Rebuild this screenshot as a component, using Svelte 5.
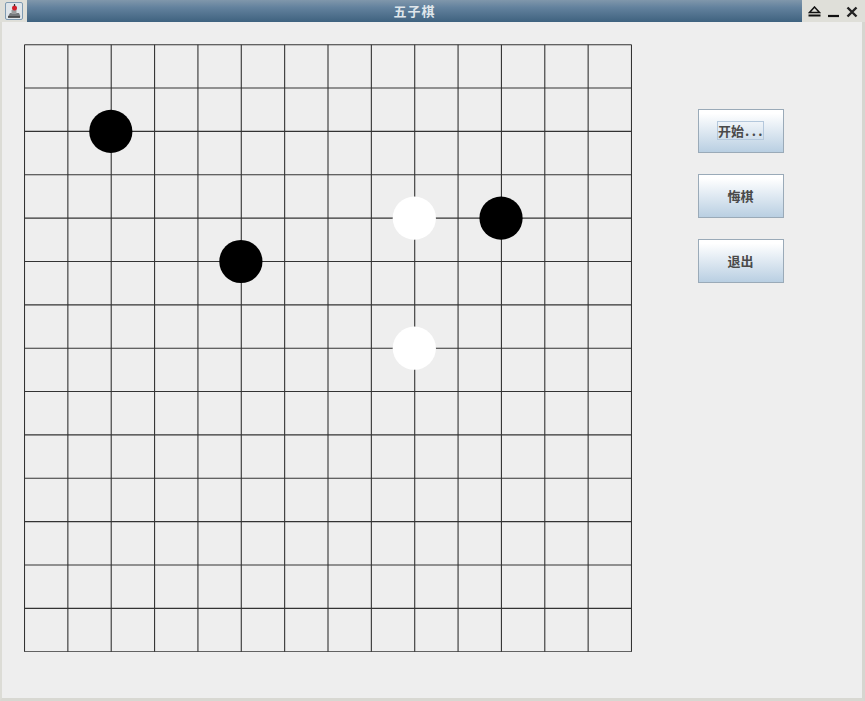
<script>
	const title = '五子棋'
	const size = 14
	const pitch = 607 / size
	const lines = Array.from({ length: size + 1 }, (_, i) => i * pitch)
	const stones = [
		{ col: 2, row: 2, color: '#000' },
		{ col: 5, row: 5, color: '#000' },
		{ col: 11, row: 4, color: '#000' },
		{ col: 9, row: 4, color: '#fff' },
		{ col: 9, row: 7, color: '#fff' }
	]
	const buttons = [
		{ label: '开始', dots: '...', focused: true },
		{ label: '悔棋' },
		{ label: '退出' }
	]
</script>

<div class="window">
	<header class="titlebar">
		<div class="app-icon">
			<svg width="18" height="18" viewBox="0 0 18 18">
				<rect x="0.5" y="0.5" width="17" height="17" rx="1.5" fill="#dfe5ea" stroke="#7f9bb2" />
				<path d="M5 11h9l1.5 3.5H3z" fill="#777a7d" />
				<path d="M6.5 8h5v4h-5z" fill="#9a9c9e" />
				<circle cx="9.5" cy="6" r="2.5" fill="#d0202c" />
				<path d="M9.5 2v2" stroke="#333" stroke-width="1.2" />
				<path d="M3 15h12" stroke="#222" stroke-width="1.4" />
			</svg>
		</div>
		<div class="title">{title}</div>
		<div class="controls">
			<svg width="13" height="12" viewBox="0 0 13 12">
				<path d="M6.5 1 11.5 6.5H1.5z" fill="none" stroke="#111" stroke-width="1.5" />
				<path d="M0.5 9.5h12" stroke="#111" stroke-width="2" />
			</svg>
			<svg width="11" height="12" viewBox="0 0 11 12">
				<path d="M0 10h11" stroke="#111" stroke-width="2.2" />
			</svg>
			<svg width="12" height="12" viewBox="0 0 12 12">
				<path d="M1.5 1.5 10.5 10.5M10.5 1.5 1.5 10.5" stroke="#222" stroke-width="2.4" />
			</svg>
		</div>
	</header>

	<main class="content">
		<svg class="board" width="608" height="608" viewBox="-0.5 -0.7 608 608">
			{#each lines as p}
				<line x1={p} y1="0" x2={p} y2="607" />
				<line x1="0" y1={p} x2="607" y2={p} />
			{/each}
			{#each stones as s}
				<circle cx={s.col * pitch - 0.4} cy={s.row * pitch} r="21.6" fill={s.color} />
			{/each}
		</svg>

		<aside class="actions">
			{#each buttons as b}
				<button>
					<span class:focused={b.focused}>{b.label}{#if b.dots}<span class="dots">{b.dots}</span>{/if}</span>
				</button>
			{/each}
		</aside>
	</main>
</div>

<style>
	:global(body) {
		margin: 0;
		background: #eeeeee;
	}
	.window {
		width: 865px;
		height: 701px;
		box-sizing: border-box;
		display: flex;
		flex-direction: column;
		background: #eeeeee;
		border-left: 2px solid #dcdcd6;
		border-right: 3px solid #d6d6d0;
		border-bottom: 3px solid #d8d8d2;
		font-family: "Noto Sans CJK SC", "Liberation Sans", sans-serif;
	}
	.titlebar {
		height: 22px;
		margin: 0 -3px 0 -2px;
		display: flex;
		flex: none;
		background: #dfdfd9;
	}
	.app-icon {
		width: 27px;
		display: flex;
		justify-content: center;
		padding-top: 2px;
		box-sizing: border-box;
	}
	.title {
		flex: 1;
		text-align: center;
		color: #dfe6eb;
		font-size: 13px;
		font-weight: 700;
		line-height: 22px;
		letter-spacing: 1px;
		background: linear-gradient(#8097ab, #62819d 35%, #3f627f);
	}
	.controls {
		width: 63px;
		box-sizing: border-box;
		display: flex;
		align-items: center;
		gap: 7px;
		padding: 2px 0 0 6px;
	}
	.content {
		flex: 1;
		display: flex;
		align-items: flex-start;
		padding: 22px 0 0 22px;
	}
	.board {
		display: block;
		flex: none;
	}
	.board line {
		stroke: #333;
		stroke-width: 1.1;
	}
	.actions {
		margin: 65px 0 0 66px;
		display: flex;
		flex-direction: column;
		gap: 21px;
	}
	button {
		width: 86px;
		height: 44px;
		padding: 0 1px 2px 0;
		display: flex;
		align-items: center;
		justify-content: center;
		border: 1px solid #9aaab8;
		background: linear-gradient(#fff, #fff 8%, #dfe9f2 50%, #b9cfe2);
		color: #4a4a4a;
		font-family: inherit;
		font-size: 13px;
		font-weight: 700;
	}
	.focused {
		border: 1px solid #b4c8dc;
		line-height: 17px;
		width: 47px;
		box-sizing: border-box;
		text-align: left;
		white-space: nowrap;
	}
	.dots {
		letter-spacing: 2.4px;
		margin-left: 1px;
	}
</style>
